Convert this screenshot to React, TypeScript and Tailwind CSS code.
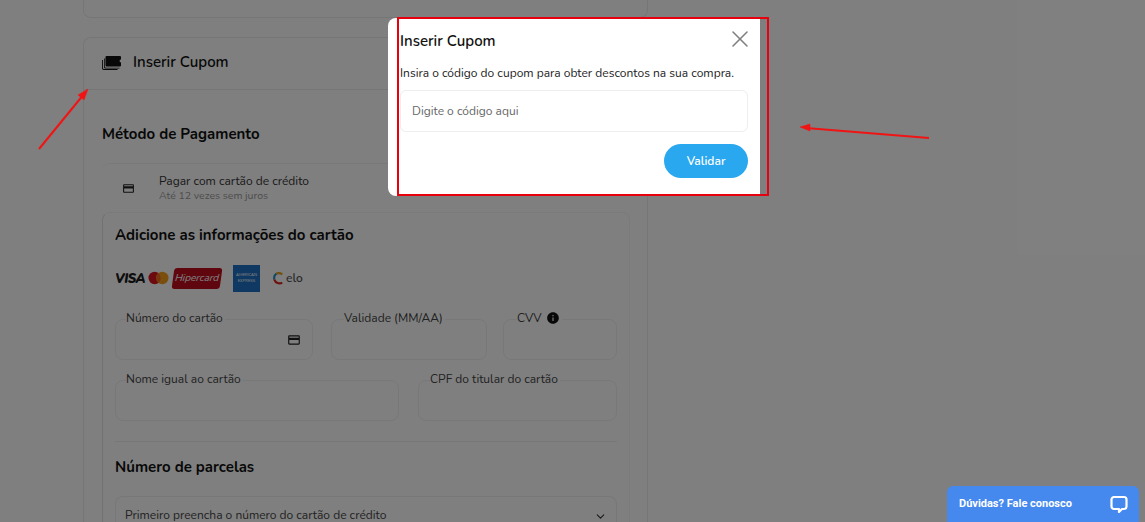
import { ChevronDown, X } from "lucide-react"
import { MdInfo, MdOutlineCreditCard } from "react-icons/md"

function Field({ label, className, labelClass, children }: { label: string; className: string; labelClass: string; children?: React.ReactNode }) {
  return (
    <div className={`relative h-[41px] rounded-lg border border-[#f1f1f1] flex items-center justify-end pr-[11px] ${className}`}>
      <span className={`absolute -top-[11px] flex items-center gap-[5px] bg-white pr-[2px] text-[12px] leading-[18px] text-[#444] ${labelClass}`}>
        {label}
      </span>
      {children}
    </div>
  )
}

function TicketIcon() {
  return (
    <svg width="20" height="14" viewBox="0 0 20 14" fill="#111">
      <path d="M4.500 0H18a1 1 0 0 1 1 1v2.600a1.400 1.400 0 0 0 0 2.800V9.500a1 1 0 0 1-1 1H4.500a1 1 0 0 1-1-1V1a1 1 0 0 1 1-1z" />
      <path d="M2 2.500h.8v8a1.200 1.200 0 0 0 1.200 1.200h13.500v.8H3.500A1.500 1.500 0 0 1 2 11z" />
      <path d="M0 4h.9v8a1.100 1.100 0 0 0 1.100 1.100h13.500v.9H1.800A1.800 1.800 0 0 1 0 12.200z" />
    </svg>
  )
}

function CardBrands() {
  return (
    <div className="mt-[20px] flex h-[28px] items-center">
      <span className="mt-[3px] text-[13px] font-black italic tracking-[-0.5px] text-[#1c1c1c]">VISA</span>
      <svg width="21" height="14" viewBox="0 0 22 14" className="ml-[3px]">
        <circle cx="7" cy="7" r="6.500" fill="#d8151f" />
        <circle cx="15" cy="7" r="6.500" fill="#f59e1c" />
        <path d="M11 2a6.500 6.500 0 0 1 0 10 6.500 6.500 0 0 1 0-10z" fill="#f26a1b" />
      </svg>
      <div className="ml-[4px] flex h-[21px] w-[48px] -skew-x-[8deg] items-center justify-center rounded-[3px] bg-[#c00d1e]">
        <span className="text-[10px] italic text-white">Hipercard</span>
      </div>
      <div className="ml-[12px] flex h-[27px] w-[27px] flex-col items-center justify-center bg-[#1f72c4] text-[4px] leading-[6px] text-white">
        <span>AMERICAN</span>
        <span>EXPRESS</span>
      </div>
      <div className="ml-[13px] flex items-center gap-[2px]">
        <svg width="11" height="13" viewBox="0 0 10 12" fill="none" strokeWidth="2">
          <path d="M8.500 2.200A5 5 0 0 0 3 1.600" stroke="#e8a020" />
          <path d="M3 1.600A5 5 0 0 0 1.200 7" stroke="#2a8fc8" />
          <path d="M1.200 7A5 5 0 0 0 8.500 9.800" stroke="#d8271f" />
        </svg>
        <span className="text-[12px] font-semibold leading-none text-[#555]">elo</span>
      </div>
    </div>
  )
}

export default function App() {
  return (
    <div className="relative h-[522px] w-[1145px] overflow-hidden bg-white font-['Nunito','Noto_Sans',sans-serif] text-[#111]">
      <div className="ml-[83px] w-[565px]">
        <div className="h-[18px] rounded-b-lg border border-t-0 border-[#ececec]" />

        <div className="mt-[19px] rounded-t-lg border border-b-0 border-[#ececec]">
          <div className="flex h-[52px] items-center gap-[11px] border-b border-[#ececec] pb-[2px] pl-[18px]">
            <TicketIcon />
            <h2 className="text-[15px] font-semibold leading-none">Inserir Cupom</h2>
          </div>

          <div className="pl-[18px] pr-[17px]">
            <h2 className="mt-[35px] text-[15px] font-bold leading-[18px]">Método de Pagamento</h2>

            <div className="mt-[20px] flex h-[49px] items-center rounded-t-lg border-t border-[#f3f3f3] pl-[20px]">
              <MdOutlineCreditCard className="text-[#222]" size={13} />
              <div className="ml-[24px]">
                <p className="text-[12px] leading-[15px] text-[#333]">Pagar com cartão de crédito</p>
                <p className="text-[10.500px] leading-[14px] text-[#999]">Até 12 vezes sem juros</p>
              </div>
            </div>

            <div className="rounded-t-lg border border-b-0 border-[#f5f5f5] border-l-[#e4e4e4] pl-[12px] pr-[12px] pt-[13px]">
              <h3 className="text-[15px] font-bold leading-[18px]">Adicione as informações do cartão</h3>
              <CardBrands />

              <div className="mt-[27px] flex">
                <Field label="Número do cartão" className="w-[198px]" labelClass="left-[10px]">
                  <MdOutlineCreditCard className="text-[#222]" size={14} />
                </Field>
                <Field label="Validade (MM/AA)" className="ml-[18px] w-[156px]" labelClass="left-[12px]" />
                <div className="relative ml-[16px] h-[41px] w-[114px] rounded-lg border border-[#f1f1f1]">
                  <span className="absolute left-[13px] -top-[11px] flex items-center gap-[5px] bg-white pr-[2px] text-[12px] leading-[18px] text-[#444]">
                    CVV <MdInfo className="text-[#111]" size={14} />
                  </span>
                </div>
              </div>

              <div className="mt-[20px] flex gap-[19px]">
                <Field label="Nome igual ao cartão" className="w-[284px]" labelClass="left-[10px]" />
                <Field label="CPF do titular do cartão" className="w-[199px]" labelClass="left-[11px]" />
              </div>

              <div className="mt-[20px] border-t border-[#eeeeee] pt-[16px]">
                <h3 className="text-[15px] font-bold leading-[18px]">Número de parcelas</h3>
                <div className="mt-[20px] flex h-[44px] items-start justify-between rounded-t-lg border border-b-0 border-[#efefef] pl-[9px] pr-[9px] pt-[12px]">
                  <span className="text-[12px] leading-[13px] text-[#444]">Primeiro preencha o número do cartão de crédito</span>
                  <ChevronDown className="mt-[1px] text-[#333]" size={13} strokeWidth={2} />
                </div>
              </div>
            </div>
          </div>
        </div>
      </div>

      <div className="absolute inset-0 bg-black/50" />

      <svg className="absolute inset-0 h-full w-full" viewBox="0 0 1145 522">
        <g stroke="#f01414" strokeWidth="2" fill="#f01414">
          <path d="M39 149 L84 94" />
          <path d="M88 89 L78 95 L84 100 Z" strokeWidth="0.5" />
          <path d="M929 138 L806 128" />
          <path d="M800 127 L810 124 L810 131 Z" strokeWidth="0.5" />
        </g>
      </svg>

      <div className="absolute left-[388px] top-[18px] h-[178px] w-[372px] rounded-l-lg bg-white pl-[12px] pr-[12px] pt-[14px]">
        <div className="flex h-[18px] items-center justify-between">
          <h2 className="text-[15px] font-semibold leading-[18px] text-[#111]">Inserir Cupom</h2>
          <X className="-mr-[6px] -mt-[4px] text-[#808080]" size={28} strokeWidth={1.300} />
        </div>
        <p className="mt-[15px] text-[12px] leading-[17px] text-[#222]">
          Insira o código do cupom para obter descontos na sua compra.
        </p>
        <div className="mt-[8px] flex h-[42px] items-center rounded-md border border-[#eeeeee] pl-[11px]">
          <span className="text-[12px] text-[#666]">Digite o código aqui</span>
        </div>
        <div className="mt-[12px] flex justify-end">
          <div className="flex h-[34px] w-[84px] items-center justify-center rounded-full bg-[#29a8ef] text-[12px] font-semibold text-white">
            Validar
          </div>
        </div>
      </div>

      <div className="absolute left-[397px] top-[17px] h-[179px] w-[372px] border-[2px] border-[#e8000f]" />

      <div className="absolute bottom-0 right-[6px] flex h-[36px] w-[192px] items-center justify-between rounded-t-md bg-[#4589ee] pl-[12px] pr-[11px] font-['Roboto',sans-serif]">
        <span className="text-[11px] font-bold text-white">Dúvidas? Fale conosco</span>
        <svg width="18" height="18" viewBox="0 0 18 18" fill="none" stroke="white" strokeWidth="2.200">
          <path d="M4 2h10a2.500 2.500 0 0 1 2.500 2.500v7A2.500 2.500 0 0 1 14 14h-2l-3 3v-3H4a2.500 2.500 0 0 1-2.500-2.500v-7A2.500 2.500 0 0 1 4 2z" strokeLinejoin="round" />
        </svg>
      </div>
    </div>
  )
}
